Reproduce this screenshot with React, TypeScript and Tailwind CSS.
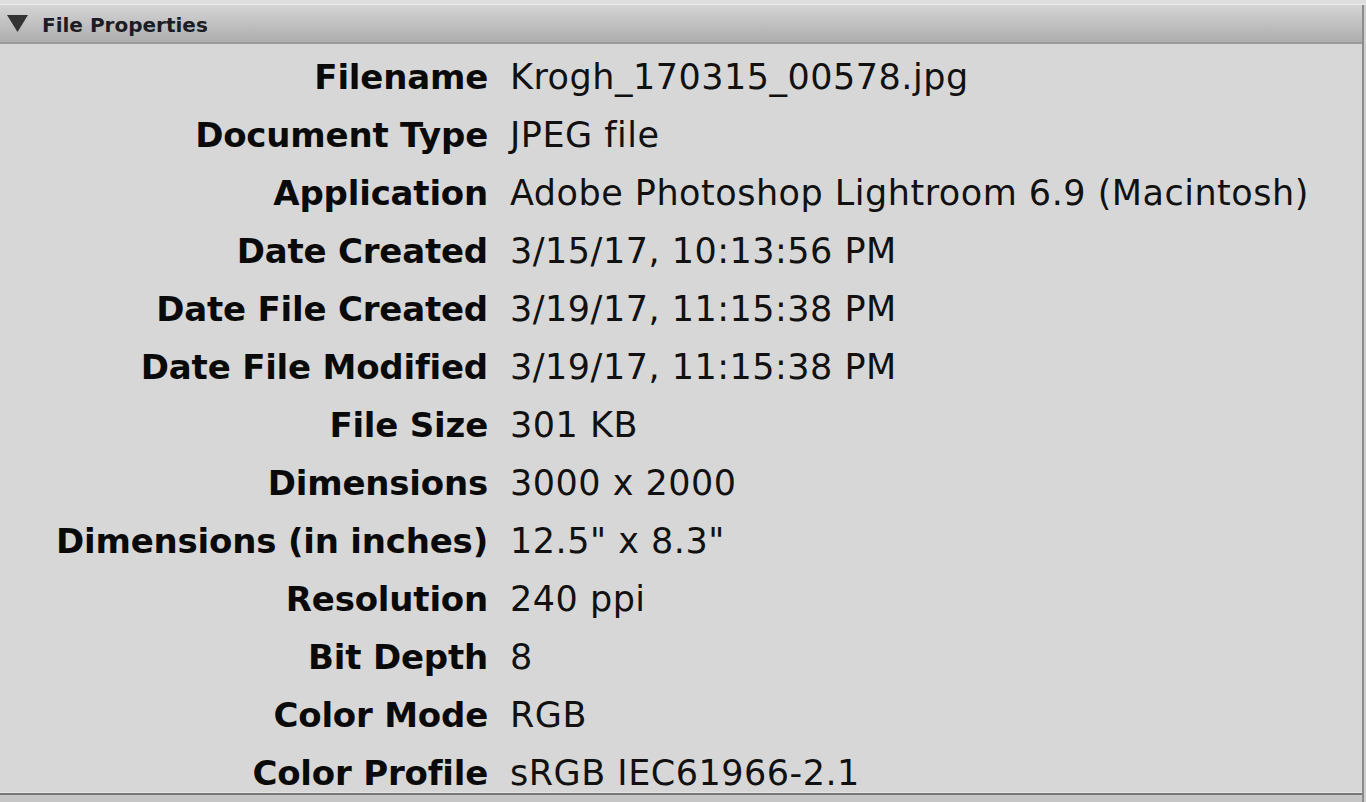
import React from 'react';

const rows: [string, string][] = [
  ['Filename', 'Krogh_170315_00578.jpg'],
  ['Document Type', 'JPEG file'],
  ['Application', 'Adobe Photoshop Lightroom 6.9 (Macintosh)'],
  ['Date Created', '3/15/17, 10:13:56 PM'],
  ['Date File Created', '3/19/17, 11:15:38 PM'],
  ['Date File Modified', '3/19/17, 11:15:38 PM'],
  ['File Size', '301 KB'],
  ['Dimensions', '3000 x 2000'],
  ['Dimensions (in inches)', '12.5" x 8.3"'],
  ['Resolution', '240 ppi'],
  ['Bit Depth', '8'],
  ['Color Mode', 'RGB'],
  ['Color Profile', 'sRGB IEC61966-2.1'],
];

const App: React.FC = () => {
  return (
    <div className="w-[1366px] h-[802px] overflow-hidden bg-[#c6c6c6] font-['DejaVu_Sans',sans-serif] flex flex-col">
      <div className="h-[5px] bg-[#dedede] border-b border-[#ececec]" />
      <div className="flex flex-1 min-h-0">
        <div className="flex-1 flex flex-col min-w-0 border-r-2 border-[#8c8c8c]">
          {/* panel header */}
          <div className="h-[39px] flex items-center pt-[3px] bg-gradient-to-b from-[#d5d5d5] to-[#adadad] border-b-2 border-[#9a9a9a]">
            <svg width="21" height="17" viewBox="0 0 21 17" className="ml-[7px] mr-[14px] -mt-[3px]">
              <polygon points="0,0 21,0 10.5,17" fill="#333333" />
            </svg>
            <span className="text-[20px] font-bold text-[#1c1c24] leading-none">File Properties</span>
          </div>

          {/* properties */}
          <div className="h-[749px] overflow-hidden bg-[#d7d7d7] pt-[4px] border-b border-[#e6e6e6]">
            {rows.map(([label, value]) => (
              <div key={label} className="h-[58px] flex items-center">
                <div className="w-[488px] shrink-0 text-right text-[34px] font-bold text-[#0a0a0a] tracking-[-0.2px] leading-none">
                  {label}
                </div>
                <div className="pl-[22px] text-[35px] text-[#111111] tracking-[0.5px] leading-none whitespace-nowrap">
                  {value}
                </div>
              </div>
            ))}
          </div>
          <div className="h-[2px] bg-[#777777]" />
        </div>
        <div className="w-[2px] bg-[#cfcfcf]" />
      </div>
    </div>
  );
};

export default App;
